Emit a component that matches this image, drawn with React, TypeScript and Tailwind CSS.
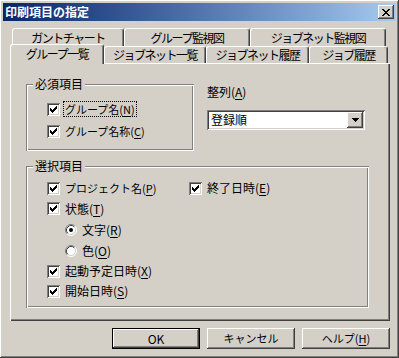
import React from "react"

// Classic Windows print-settings dialog

const raised =
  "shadow-[inset_-1px_-1px_#404040,inset_1px_1px_#fff,inset_-2px_-2px_#808080,inset_2px_2px_#d4d0c8]"
const sunken =
  "shadow-[inset_1px_1px_#808080,inset_-1px_-1px_#fff,inset_2px_2px_#404040,inset_-2px_-2px_#d4d0c8]"
const etched =
  "shadow-[inset_1px_1px_#808080,inset_-1px_-1px_#fff,inset_2px_2px_#fff,inset_-2px_-2px_#808080]"

// katakana-heavy strings are set a bit narrower, as in the bitmap UI font
const kana = "text-[11px]"

function Check({ checked = true }: { checked?: boolean }) {
  return (
    <span className={`w-[13px] h-[13px] bg-white shrink-0 flex items-center justify-center ${sunken}`}>
      {checked && (
        <svg width="7" height="7" viewBox="0 0 7 7" shapeRendering="crispEdges">
          <path
            d="M0 2h1v3h-1z M1 3h1v3h-1z M2 4h1v3h-1z M3 3h1v3h-1z M4 2h1v3h-1z M5 1h1v3h-1z M6 0h1v3h-1z"
            fill="#000"
          />
        </svg>
      )}
    </span>
  )
}

function Radio({ checked }: { checked: boolean }) {
  return (
    <svg width="12" height="12" viewBox="0 0 12 12" className="shrink-0">
      <circle cx="6" cy="6" r="5" fill="#fff" />
      <path d="M2.11 9.89 A5.5 5.5 0 0 1 9.89 2.11" stroke="#808080" fill="none" />
      <path d="M9.89 2.11 A5.5 5.5 0 0 1 2.11 9.89" stroke="#fff" fill="none" />
      <path d="M2.82 9.18 A4.5 4.5 0 0 1 9.18 2.82" stroke="#404040" fill="none" />
      <path d="M9.18 2.82 A4.5 4.5 0 0 1 2.82 9.18" stroke="#d4d0c8" fill="none" />
      {checked && <circle cx="6" cy="6" r="2" fill="#000" />}
    </svg>
  )
}

function Label({ text, k, focus, size = "" }: { text: string; k: string; focus?: boolean; size?: string }) {
  return (
    <span className={`ml-[4px] px-px leading-[14px] ${size} ${focus ? "outline-1 outline-dotted outline-black" : ""}`}>
      {text}(<span className="underline underline-offset-[2px]">{k}</span>)
    </span>
  )
}

function CheckRow({ text, k, focus, h, size }: { text: string; k: string; focus?: boolean; h: string; size?: string }) {
  return (
    <div className={`flex items-center ${h}`}>
      <Check />
      <Label text={text} k={k} focus={focus} size={size} />
    </div>
  )
}

function Tab({ label, w, selected }: { label: string; w: string; selected?: boolean }) {
  return (
    <div
      className={`${w} flex items-center justify-center bg-[#d4d0c8] text-[12px] tracking-[-1.5px] border-l border-t border-white border-r border-r-[#404040] rounded-t-[3px] shadow-[inset_-1px_0_#808080] ${
        selected ? "h-[20px] self-end -mb-px pb-[2px]" : "h-full"
      }`}
    >
      {label}
    </div>
  )
}

function Button({ children, isDefault }: { children: React.ReactNode; isDefault?: boolean }) {
  return (
    <div className={`w-[88px] h-[21px] ${isDefault ? "border border-black" : ""}`}>
      <div className={`w-full h-full flex items-center justify-center ${raised}`}>{children}</div>
    </div>
  )
}

export default function App() {
  return (
    <div
      className={`w-[399px] h-[358px] bg-[#d4d0c8] p-[3px] flex flex-col text-[12px] text-black font-['Noto_Sans_CJK_JP','Noto_Sans_CJK_SC',sans-serif] ${raised}`}
    >
      {/* title bar */}
      <div className="h-[18px] flex items-center justify-between bg-gradient-to-r from-[#0a246a] to-[#a6caf0] pl-[2px] pr-[2px]">
        <span className="text-white font-bold text-[12px] leading-none">印刷項目の指定</span>
        <div className={`w-[16px] h-[14px] bg-[#d4d0c8] flex items-center justify-center ${raised}`}>
          <svg width="8" height="7" viewBox="0 0 8 7" shapeRendering="crispEdges">
            <path d="M0 0h2l2 2.5 2-2.5h2l-3 3.5 3 3.5h-2l-2-2.5-2 2.5h-2l3-3.5z" fill="#000" />
          </svg>
        </div>
      </div>

      {/* tabs */}
      <div className="mt-[7px] ml-[7px] w-[380px] flex flex-col">
        <div className="flex h-[18px] pl-[2px]">
          <Tab label="ガントチャート" w="w-[112px]" />
          <Tab label="グループ監視図" w="w-[126px]" />
          <Tab label="ジョブネット監視図" w="w-[136px]" />
        </div>
        <div className="flex h-[17px] items-end relative z-10">
          <Tab label="グループ一覧" w="w-[94px]" selected />
          <Tab label="ジョブネット一覧" w="w-[102px]" />
          <Tab label="ジョブネット履歴" w="w-[103px]" />
          <Tab label="ジョブ履歴" w="w-[79px]" />
        </div>

        {/* panel */}
        <div className="h-[258px] pl-[16px] pt-[21px] flex flex-col shadow-[inset_1px_1px_#fff,inset_-1px_-1px_#404040,inset_-2px_-2px_#808080]">
          <div className="flex">
            <div className={`relative w-[168px] h-[67px] pl-[21px] pt-[14px] ${etched}`}>
              <span className="absolute -top-[8px] left-[7px] px-[2px] bg-[#d4d0c8] leading-[16px]">必須項目</span>
              <CheckRow text="グループ名" k="N" focus h="h-[22px]" size={kana} />
              <CheckRow text="グループ名称" k="C" h="h-[22px]" size={kana} />
            </div>
            <div className="ml-[13px] flex flex-col">
              <span className="leading-[16px]">
                整列(<span className="underline underline-offset-[2px]">A</span>)
              </span>
              <div className={`mt-[10px] w-[158px] h-[20px] bg-white p-[2px] flex items-center justify-between ${sunken}`}>
                <span className="pl-[2px] leading-none">登録順</span>
                <div className={`w-[16px] h-[16px] bg-[#d4d0c8] flex items-center justify-center ${raised}`}>
                  <svg width="7" height="4" viewBox="0 0 7 4" shapeRendering="crispEdges">
                    <path d="M0 0h7l-3.5 4z" fill="#000" />
                  </svg>
                </div>
              </div>
            </div>
          </div>

          <div className={`relative mt-[15px] w-[343px] h-[142px] pl-[21px] pt-[12px] flex flex-col ${etched}`}>
            <span className="absolute -top-[8px] left-[7px] px-[2px] bg-[#d4d0c8] leading-[16px]">選択項目</span>
            <div className="flex items-center h-[20px]">
              <div className="w-[142px] flex items-center">
                <Check />
                <Label text="プロジェクト名" k="P" size={kana} />
              </div>
              <Check />
              <Label text="終了日時" k="E" />
            </div>
            <CheckRow text="状態" k="T" h="h-[21px]" />
            <div className="flex items-center h-[21px] pl-[18px]">
              <Radio checked />
              <Label text="文字" k="R" />
            </div>
            <div className="flex items-center h-[21px] pl-[18px]">
              <Radio checked={false} />
              <Label text="色" k="O" />
            </div>
            <CheckRow text="起動予定日時" k="X" h="h-[20px]" />
            <CheckRow text="開始日時" k="S" h="h-[20px]" />
          </div>
        </div>
      </div>

      {/* buttons */}
      <div className="mt-[7px] flex justify-end gap-[7px] pr-[6px]">
        <Button isDefault>OK</Button>
        <Button>
          <span className={kana}>キャンセル</span>
        </Button>
        <Button>
          <span className={kana}>
            ヘルプ(<span className="underline underline-offset-[2px]">H</span>)
          </span>
        </Button>
      </div>
    </div>
  )
}
